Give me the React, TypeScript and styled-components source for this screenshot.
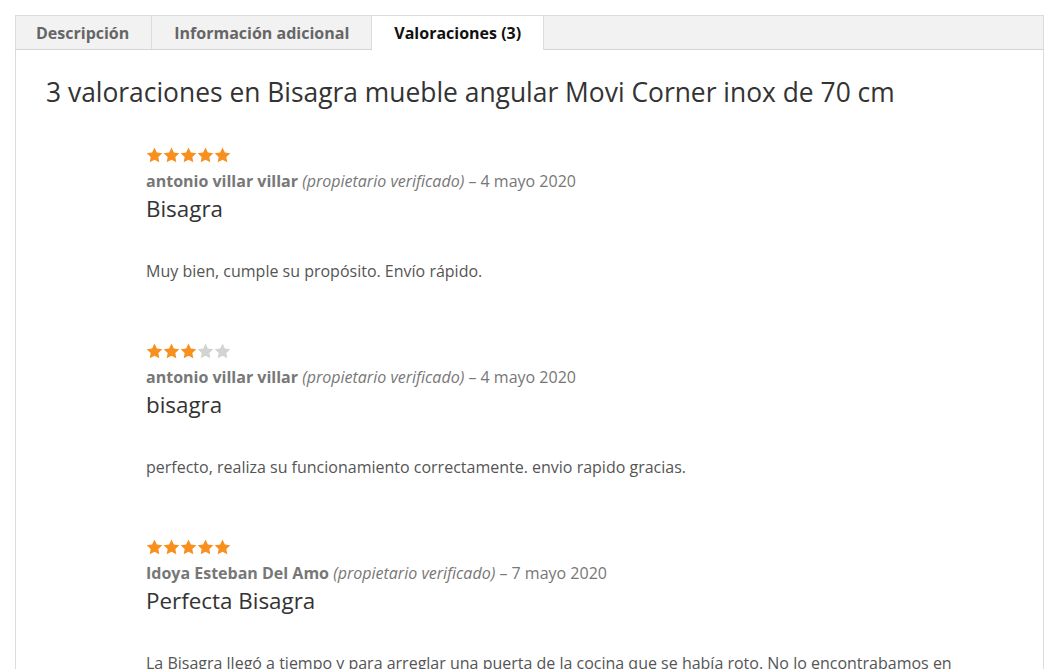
import React from "react";
import styled, { createGlobalStyle } from "styled-components";

const Global = createGlobalStyle`
  html, body { margin: 0; padding: 0; background: #fff; }
  body { font-family: "Open Sans", "Noto Sans", sans-serif; }
`;

const Page = styled.div`
  padding: 15px 13px 0 15px;
  width: 1029px;
  height: 654px;
  overflow: hidden;
`;

const TabBar = styled.ul`
  display: flex;
  margin: 0;
  padding: 0;
  list-style: none;
  background: #f2f2f2;
  border: 1px solid #dcdcdc;
  border-bottom: 1px solid #d3d3d8;
  height: 33px;
`;

const Tab = styled.li<{ $active?: boolean }>`
  display: flex;
  align-items: center;
  padding: 0 22px;
  font-size: 16px;
  font-weight: 700;
  color: ${(p) => (p.$active ? "#111" : "#666")};
  background: ${(p) => (p.$active ? "#fff" : "transparent")};
  border-right: 1px solid #dcdcdc;
  height: ${(p) => (p.$active ? "34px" : "33px")};
  position: relative;
  z-index: 1;
  box-sizing: border-box;
  &:first-child { padding-left: 20px; }
`;

const Panel = styled.div`
  border-left: 1px solid #dcdcdc;
  border-right: 1px solid #dcdcdc;
  padding: 25px 30px 0 30px;
  height: 620px;
`;

const Heading = styled.h2`
  margin: 0 0 38px 0;
  font-size: 26.4px;
  font-weight: 400;
  color: #333;
  line-height: 34px;
`;

const ReviewList = styled.ol`
  list-style: none;
  margin: 0;
  padding: 0 0 0 100px;
`;

const Review = styled.li`
  margin: 0 0 60px 0;
`;

const Stars = styled.div`
  display: flex;
  height: 16px;
  margin-bottom: 6px;
`;

const Meta = styled.p`
  margin: 0;
  font-size: 16px;
  line-height: 24px;
  color: #777;
`;

const Author = styled.strong`
  font-weight: 700;
`;

const Verified = styled.em`
  font-style: italic;
`;

const Title = styled.h3`
  margin: 0 0 34px 0;
  font-size: 22.4px;
  font-weight: 400;
  color: #333;
  line-height: 32px;
`;

const Body = styled.p`
  margin: 0;
  font-size: 16px;
  line-height: 24px;
  color: #555;
`;

const Star = ({ filled }: { filled: boolean }) => (
  <svg width="17" height="16" viewBox="0 0 24 23">
    <path
      d="M12 0.8l3.4 7.1 7.8 1-5.7 5.4 1.4 7.7L12 18.3l-6.9 3.7 1.4-7.7L0.8 8.9l7.8-1z"
      fill={filled ? "#f7901e" : "#d3d3d3"}
    />
  </svg>
);

const reviews = [
  {
    rating: 5,
    author: "antonio villar villar",
    date: "4 mayo 2020",
    title: "Bisagra",
    body: "Muy bien, cumple su propósito. Envío rápido.",
  },
  {
    rating: 3,
    author: "antonio villar villar",
    date: "4 mayo 2020",
    title: "bisagra",
    body: "perfecto, realiza su funcionamiento correctamente. envio rapido gracias.",
  },
  {
    rating: 5,
    author: "Idoya Esteban Del Amo",
    date: "7 mayo 2020",
    title: "Perfecta Bisagra",
    body: "La Bisagra llegó a tiempo y para arreglar una puerta de la cocina que se había roto. No lo encontrabamos en ninguna ferretería de la zona.",
  },
];

export default function App() {
  return (
    <Page>
      <Global />
      <TabBar>
        <Tab>Descripción</Tab>
        <Tab>Información adicional</Tab>
        <Tab $active>Valoraciones (3)</Tab>
      </TabBar>
      <Panel>
        <Heading>3 valoraciones en Bisagra mueble angular Movi Corner inox de 70 cm</Heading>
        <ReviewList>
          {reviews.map((r, i) => (
            <Review key={i}>
              <Stars>
                {[1, 2, 3, 4, 5].map((n) => (
                  <Star key={n} filled={n <= r.rating} />
                ))}
              </Stars>
              <Meta>
                <Author>{r.author}</Author> <Verified>(propietario verificado)</Verified> – {r.date}
              </Meta>
              <Title>{r.title}</Title>
              <Body>{r.body}</Body>
            </Review>
          ))}
        </ReviewList>
      </Panel>
    </Page>
  );
}
